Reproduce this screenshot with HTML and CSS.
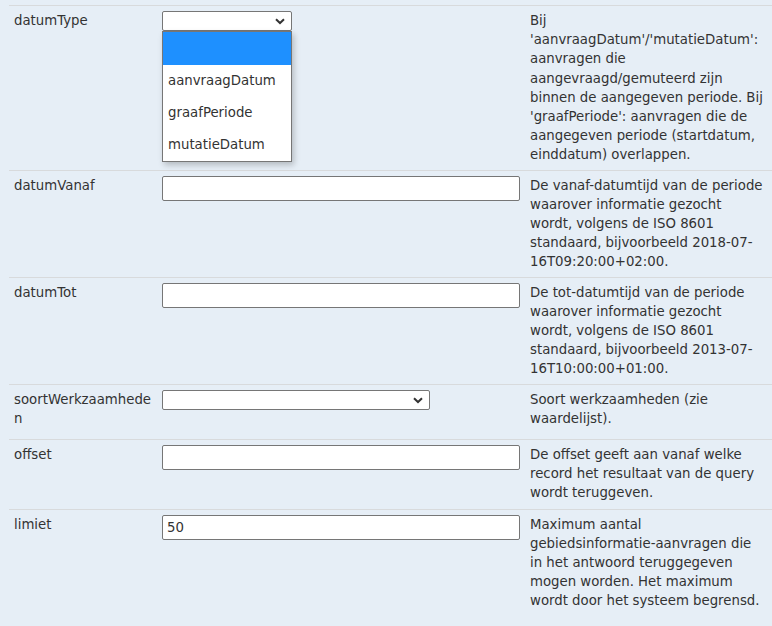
FILE: index.html
```html
<!DOCTYPE html>
<html lang="nl">
<head>
<meta charset="utf-8">
<title>Parameters</title>
<link rel="stylesheet" href="styles.css">
</head>
<body>
<div class="params">
  <div class="row">
    <div class="name">datumType</div>
    <div class="field">
      <div class="select-wrap">
        <select class="select select--short" aria-label="datumType">
          <option></option>
          <option>aanvraagDatum</option>
          <option>graafPeriode</option>
          <option>mutatieDatum</option>
        </select>
        <svg class="chevron" width="10" height="7" viewBox="0 0 10 7"><path d="M1 1.2 L5 5 L9 1.2" fill="none" stroke="#333" stroke-width="2"/></svg>
        <ul class="dropdown">
          <li class="option option--active"></li>
          <li class="option">aanvraagDatum</li>
          <li class="option">graafPeriode</li>
          <li class="option">mutatieDatum</li>
        </ul>
      </div>
    </div>
    <div class="desc">Bij 'aanvraagDatum'/'mutatieDatum': aanvragen die aangevraagd/gemuteerd zijn binnen de aangegeven periode. Bij 'graafPeriode': aanvragen die de aangegeven periode (startdatum, einddatum) overlappen.</div>
  </div>
  <div class="row">
    <div class="name">datumVanaf</div>
    <div class="field"><input class="input" type="text" aria-label="datumVanaf"></div>
    <div class="desc">De vanaf-datumtijd van de periode waarover informatie gezocht wordt, volgens de ISO 8601 standaard, bijvoorbeeld 2018-07-<wbr>16T09:20:00+02:00.</div>
  </div>
  <div class="row">
    <div class="name">datumTot</div>
    <div class="field"><input class="input" type="text" aria-label="datumTot"></div>
    <div class="desc">De tot-datumtijd van de periode waarover informatie gezocht wordt, volgens de ISO 8601 standaard, bijvoorbeeld 2013-07-<wbr>16T10:00:00+01:00.</div>
  </div>
  <div class="row row--select">
    <div class="name">soortWerkzaamheden</div>
    <div class="field">
      <div class="select-wrap">
        <select class="select select--long" aria-label="soortWerkzaamheden">
          <option></option>
        </select>
        <svg class="chevron" width="10" height="7" viewBox="0 0 10 7"><path d="M1 1.2 L5 5 L9 1.2" fill="none" stroke="#333" stroke-width="2"/></svg>
      </div>
    </div>
    <div class="desc">Soort werkzaamheden (zie waardelijst).</div>
  </div>
  <div class="row row--mid">
    <div class="name">offset</div>
    <div class="field"><input class="input" type="text" aria-label="offset"></div>
    <div class="desc">De offset geeft aan vanaf welke record het resultaat van de query wordt teruggeven.</div>
  </div>
  <div class="row">
    <div class="name">limiet</div>
    <div class="field"><input class="input" type="text" value="50" aria-label="limiet"></div>
    <div class="desc">Maximum aantal gebiedsinformatie-aanvragen die in het antwoord teruggegeven mogen worden. Het maximum wordt door het systeem begrensd.</div>
  </div>
</div>
</body>
</html>
```
FILE: styles.css
```css
html, body {
  margin: 0;
  background: #e6eef6;
}
body {
  font-family: "DejaVu Sans", Verdana, sans-serif;
  font-size: 13.3px;
  line-height: 19.2px;
  color: #333;
  overflow: hidden;
}
.params {
  padding: 5px 0 0 9px;
}
.row {
  display: grid;
  grid-template-columns: 148px 368px 1fr;
  border-top: 1px solid #d8dadc;
}
.name, .field, .desc {
  padding: 5px;
}
.name {
  overflow-wrap: anywhere;
}
.desc {
  padding-right: 8px;
}
.row--select .desc {
  padding-bottom: 11px;
}
.row--mid .desc {
  padding-bottom: 6px;
}
.select-wrap {
  position: relative;
  display: inline-block;
  vertical-align: top;
}
.select {
  display: block;
  -webkit-appearance: none;
  appearance: none;
  box-sizing: border-box;
  height: 20px;
  margin: 0;
  padding: 0 4px;
  border: 1px solid #767676;
  border-radius: 2px;
  background: #fff;
  font: inherit;
  color: #333;
}
.select--short { width: 130px; }
.select--long { width: 268px; }
.chevron {
  position: absolute;
  top: 7px;
  right: 7px;
  pointer-events: none;
}
.input {
  display: block;
  box-sizing: border-box;
  width: 358px;
  height: 25px;
  margin: 0;
  padding: 0 4px;
  border: 1px solid #767676;
  border-radius: 2px;
  background: #fff;
  font: inherit;
  color: #333;
}
.dropdown {
  position: absolute;
  top: 20px;
  left: 0;
  width: 130px;
  box-sizing: border-box;
  margin: 0;
  padding: 0;
  list-style: none;
  background: #fff;
  border: 1px solid #767676;
  box-shadow: 2px 3px 6px rgba(0, 0, 0, 0.22);
  z-index: 2;
}
.option {
  height: 32px;
  line-height: 32px;
  padding-left: 5px;
}
.option--active {
  height: 33px;
  background: #1e90ff;
}
```
